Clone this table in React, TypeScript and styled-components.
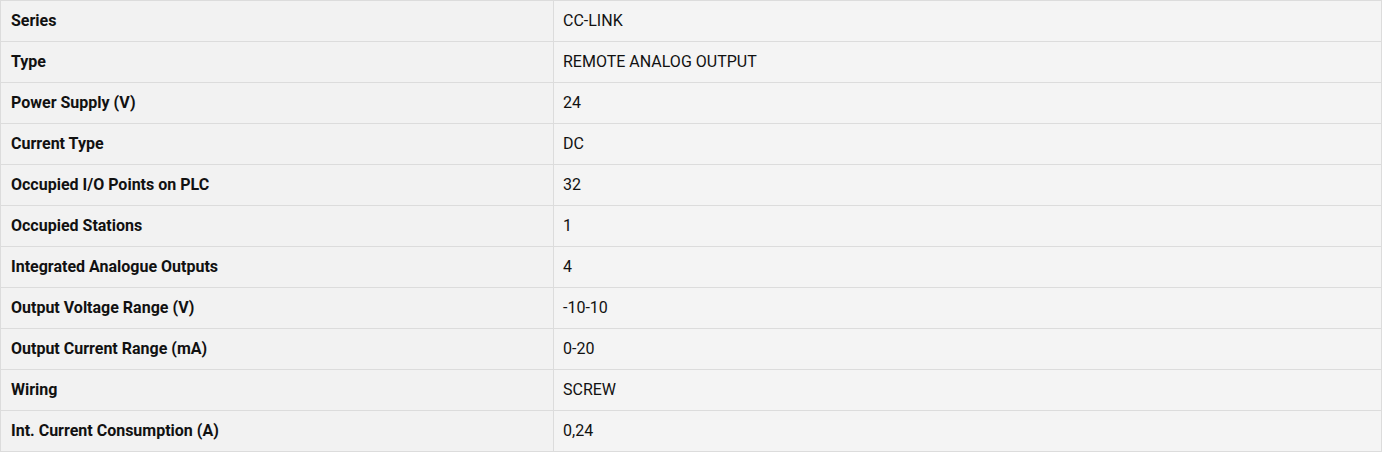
import styled, { createGlobalStyle } from 'styled-components';

const GlobalStyle = createGlobalStyle`
  body {
    margin: 0;
    background: #ffffff;
    font-family: Roboto, "Liberation Sans", sans-serif;
  }
`

const specs: [string, string][] = [
  ['Series', 'CC-LINK'],
  ['Type', 'REMOTE ANALOG OUTPUT'],
  ['Power Supply (V)', '24'],
  ['Current Type', 'DC'],
  ['Occupied I/O Points on PLC', '32'],
  ['Occupied Stations', '1'],
  ['Integrated Analogue Outputs', '4'],
  ['Output Voltage Range (V)', '-10-10'],
  ['Output Current Range (mA)', '0-20'],
  ['Wiring', 'SCREW'],
  ['Int. Current Consumption (A)', '0,24'],
]

export default function App() {
  return (
    <>
      <GlobalStyle />
      <SpecTable>
        <tbody>
          {specs.map(([label, value]) => (
            <Row key={label}>
              <Label>{label}</Label>
              <Value>{value}</Value>
            </Row>
          ))}
        </tbody>
      </SpecTable>
    </>
  )
}

const SpecTable = styled.table`
  width: 1382px;
  border-collapse: collapse;
  border: 1px solid #dcdcdc;
  font-size: 16px;
  color: #111;
`

const Row = styled.tr`
  height: 41px;
`

const Label = styled.td`
  width: 532px;
  padding: 0 10px;
  background: #f2f2f2;
  border: 1px solid #dcdcdc;
  font-weight: 700;
  line-height: 20px;
`

const Value = styled.td`
  padding: 0 9px;
  background: #f4f4f4;
  border: 1px solid #dcdcdc;
  line-height: 20px;
`
